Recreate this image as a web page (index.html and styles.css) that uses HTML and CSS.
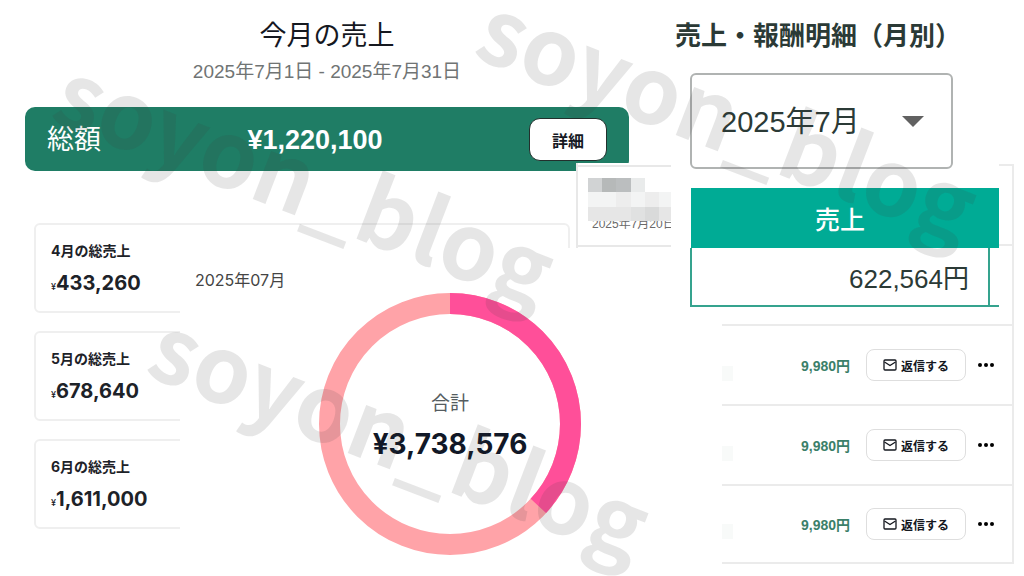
FILE: index.html
```
<!DOCTYPE html>
<html lang="ja">
<head>
  <meta charset="UTF-8">
  <meta name="viewport" content="width=device-width, initial-scale=1.0">
  <title>今月の売上</title>
  <link rel="stylesheet" href="styles.css">
</head>
<body>
  <div class="collage">
    <main class="sales">
      <header class="sales-header">
        <h1>今月の売上</h1>
        <p>2025年7月1日 - 2025年7月31日</p>
      </header>

      <section class="total-bar">
        <span class="total-label">総額</span>
        <strong class="total-value">¥1,220,100</strong>
        <button type="button" class="detail-button">詳細</button>
      </section>

      <div class="overview">
        <div class="months">
          <section class="month-card">
            <h2>4月の総売上</h2>
            <p><small>¥</small>433,260</p>
          </section>
          <section class="month-card">
            <h2>5月の総売上</h2>
            <p><small>¥</small>678,640</p>
          </section>
          <section class="month-card">
            <h2>6月の総売上</h2>
            <p><small>¥</small>1,611,000</p>
          </section>
        </div>

        <section class="chart-panel">
          <h2>2025年07月</h2>
          <div class="donut">
            <svg viewBox="0 0 262 262" aria-hidden="true">
              <circle class="ring" cx="131" cy="131" r="120.5"/>
              <circle class="ring-part" cx="131" cy="131" r="120.5" pathLength="1000" stroke-dasharray="369 631" transform="rotate(-90 131 131)"/>
            </svg>
            <div class="donut-text">
              <span>合計</span>
              <strong>¥3,738,576</strong>
            </div>
          </div>
        </section>
      </div>

      <aside class="message-card">
        <svg class="mosaic" viewBox="0 0 84 43" aria-hidden="true" shape-rendering="crispEdges">
          <path fill="#d1d3d4" d="M0 0h14v14H0z"/>
          <path fill="#b6b9b9" d="M14 0h14v14H14z"/>
          <path fill="#bbbebf" d="M28 0h15v14H28z"/>
          <path fill="#e9ebeb" d="M43 0h14v14H43z"/>
          <path fill="#f3f4f4" d="M0 14h84v15H0z"/>
          <path fill="#ededed" d="M28 14h15v15H28zM57 14h14v15H57z"/>
          <path fill="#e6e6e6" d="M0 29h84v14H0z"/>
          <path fill="#e0e1e1" d="M43 29h14v14H43z"/>
          <path fill="#d9dada" d="M57 29h14v14H57z"/>
        </svg>
        <time datetime="2025-07-20">2025年7月20日</time>
      </aside>
    </main>

    <div class="side">
      <ul class="orders">
        <li></li>
        <li></li>
        <li>
          <i class="smudge"></i>
          <span class="price">9,980円</span>
          <button type="button" class="reply-button">
            <svg viewBox="0 0 14 12" aria-hidden="true"><rect x="1" y="1" width="12" height="10" rx="1"/><path d="M1.5 3 7 6.500 12.500 3"/></svg>
            返信する
          </button>
          <button type="button" class="more-button" aria-label="その他">
            <svg viewBox="0 0 16 4" aria-hidden="true"><circle cx="2" cy="2" r="2"/><circle cx="8" cy="2" r="2"/><circle cx="14" cy="2" r="2"/></svg>
          </button>
        </li>
        <li>
          <i class="smudge"></i>
          <span class="price">9,980円</span>
          <button type="button" class="reply-button">
            <svg viewBox="0 0 14 12" aria-hidden="true"><rect x="1" y="1" width="12" height="10" rx="1"/><path d="M1.5 3 7 6.500 12.500 3"/></svg>
            返信する
          </button>
          <button type="button" class="more-button" aria-label="その他">
            <svg viewBox="0 0 16 4" aria-hidden="true"><circle cx="2" cy="2" r="2"/><circle cx="8" cy="2" r="2"/><circle cx="14" cy="2" r="2"/></svg>
          </button>
        </li>
        <li>
          <i class="smudge"></i>
          <span class="price">9,980円</span>
          <button type="button" class="reply-button">
            <svg viewBox="0 0 14 12" aria-hidden="true"><rect x="1" y="1" width="12" height="10" rx="1"/><path d="M1.5 3 7 6.500 12.500 3"/></svg>
            返信する
          </button>
          <button type="button" class="more-button" aria-label="その他">
            <svg viewBox="0 0 16 4" aria-hidden="true"><circle cx="2" cy="2" r="2"/><circle cx="8" cy="2" r="2"/><circle cx="14" cy="2" r="2"/></svg>
          </button>
        </li>
      </ul>

      <section class="report">
        <h2><label for="month">売上・報酬明細（月別）</label></h2>
        <div class="report-body">
          <div class="month-select">
            <select id="month">
              <option>2025年7月</option>
            </select>
            <svg viewBox="0 0 22 11" aria-hidden="true"><path d="M0 0h22L11 11z"/></svg>
          </div>
          <table>
            <thead>
              <tr><th scope="col">売上</th><td></td></tr>
            </thead>
            <tbody>
              <tr><td>622,564円</td><td></td></tr>
            </tbody>
          </table>
        </div>
      </section>
    </div>

    <span class="watermark watermark-top">soyon_blog</span>
    <span class="watermark watermark-right">soyon_blog</span>
    <span class="watermark watermark-bottom">soyon_blog</span>
  </div>
</body>
</html>
```
FILE: styles.css
```
* {
  box-sizing: border-box;
}

body {
  margin: 0;
  background-color: #fff;
  color: #1d2228;
  font-family: "Liberation Sans", "Noto Sans CJK JP", sans-serif;
  font-optical-sizing: none;
}

h1, h2, p, ul {
  margin: 0;
  padding: 0;
}

button, select {
  font-family: inherit;
  color: inherit;
  cursor: pointer;
}

.collage {
  position: relative;
  display: grid;
  grid-template-columns: 660fr 364fr;
  min-height: 100vh;
  overflow: hidden;
}

/* left side */
.sales {
  position: relative;
  display: flex;
  flex-direction: column;
  padding: 16px 0 0 25px;
}

.sales-header {
  margin-right: 31px;
  text-align: center;
}

.sales-header h1 {
  font-size: 27px;
  line-height: 40px;
  font-weight: 400;
  color: #15181f;
}

.sales-header p {
  font-size: 19px;
  line-height: 32px;
  color: #707474;
}

.total-bar {
  display: grid;
  grid-template-columns: 25fr auto 28fr;
  align-items: center;
  min-height: 64px;
  margin: 19px 31px 0 0;
  padding: 1px 22px 0;
  border-radius: 10px;
  background-color: #1f7d65;
  color: #fff;
}

.total-label,
.total-value {
  font-size: 27px;
  line-height: 40px;
}

.detail-button {
  justify-self: end;
  width: 78px;
  height: 43px;
  padding: 0;
  border: 1px solid #22302d;
  border-radius: 11px;
  background-color: #fff;
  color: #15181f;
  font-size: 16px;
  font-weight: 700;
}

.overview {
  flex: 1;
  display: grid;
  margin-top: 52px;
}

.months,
.chart-panel {
  grid-area: 1 / 1;
}

.months {
  display: flex;
  flex-direction: column;
  gap: 18px;
  margin: 0 90px 0 9px;
}

.month-card {
  height: 90px;
  padding: 15px;
  border: 2px solid #efefef;
  border-radius: 6px;
  font-family: Inter, "Noto Sans CJK JP", sans-serif;
}

.month-card h2 {
  font-size: 14px;
  line-height: 22px;
  font-weight: 700;
}

.month-card p {
  margin-top: 6px;
  font-size: 20px;
  line-height: 30px;
  font-weight: 700;
}

.month-card small {
  font-size: 9px;
  font-weight: 500;
}

/* covers the right part of the month cards */
.chart-panel {
  margin: 25px -60px 0 155px;
  padding-top: 20px;
  background-color: #fff;
  font-family: Inter, "Noto Sans CJK JP", sans-serif;
}

.chart-panel h2 {
  padding-left: 15px;
  font-size: 16px;
  line-height: 25px;
  font-weight: 400;
  color: #444;
}

.donut {
  display: grid;
  width: 262px;
  margin: 0 auto;
}

.donut svg,
.donut-text {
  grid-area: 1 / 1;
}

.donut circle {
  fill: none;
  stroke-width: 21;
}

.ring {
  stroke: #ffa3a8;
}

.ring-part {
  stroke: #ff4f99;
}

.donut-text {
  display: flex;
  flex-direction: column;
  align-items: center;
  justify-content: center;
}

.donut-text span {
  font-size: 19px;
  line-height: 40px;
  color: #555c60;
}

.donut-text strong {
  font-size: 28px;
  line-height: 40px;
  color: #111827;
}

/* lies over the corner of the total bar */
.message-card {
  position: absolute;
  top: 163px;
  left: 576px;
  width: 95px;
  height: 85px;
  padding: 12px 0 0 10px;
  overflow: hidden;
  border-left: 2px solid #e8e8e8;
  background: linear-gradient(#e8e8e8, #e8e8e8) 0 2px / 100% 2px no-repeat,
    linear-gradient(#e8e8e8, #e8e8e8) 0 82px / 100% 2px no-repeat, #fff;
}

.mosaic {
  position: relative;
  display: block;
  width: 84px;
  margin-top: 3px;
}

.message-card time {
  display: block;
  margin: -6px 0 0 4px;
  font-size: 12px;
  line-height: 18px;
  white-space: nowrap;
  color: #6a6a6a;
}

/* right side */
.side {
  position: relative;
  display: grid;
}

.orders,
.report {
  grid-area: 1 / 1;
  align-self: start;
}

.orders {
  margin: 164px 10px 0 62px;
  border-right: 2px solid #ebebeb;
  list-style: none;
}

.orders li {
  display: flex;
  align-items: center;
  justify-content: flex-end;
  height: 80px;
  padding-right: 18px;
  border-top: 2px solid #ebebeb;
}

.orders li:last-child {
  border-bottom: 2px solid #ebebeb;
}

.smudge {
  align-self: flex-end;
  width: 11px;
  height: 15px;
  margin: 0 auto 23px 0;
  background-color: #f8faf9;
}

.price {
  font-size: 14px;
  font-weight: 700;
  color: #3b8069;
}

.reply-button {
  display: flex;
  align-items: center;
  justify-content: center;
  gap: 4px;
  width: 100px;
  height: 32px;
  margin: 0 12px 0 16px;
  padding: 0;
  border: 1px solid #dedede;
  border-radius: 8px;
  background-color: #fff;
  color: #15181f;
  font-size: 12px;
  font-weight: 700;
}

.reply-button svg {
  width: 14px;
  height: 12px;
  fill: none;
  stroke: #15181f;
  stroke-width: 1.3;
}

.more-button {
  display: flex;
  padding: 0;
  border: 0;
  background: none;
}

.more-button svg {
  width: 16px;
  height: 4px;
}

.report {
  margin: 0 25px 0 11px;
  padding: 16px 0 12px 4px;
  background-color: #fff;
  color: #2b3a36;
}

.report h2 {
  font-size: 26px;
  line-height: 40px;
  font-weight: 700;
  white-space: nowrap;
}

.report-body {
  margin: 17px 0 0 15px;
}

.month-select {
  position: relative;
  width: 85%;
}

.month-select select {
  appearance: none;
  display: block;
  width: 100%;
  height: 96px;
  padding: 2px 29px 0;
  border: 2px solid #b0b3b2;
  border-radius: 6px;
  background-color: #fff;
  font-size: 29px;
}

.month-select svg {
  position: absolute;
  top: 43px;
  right: 29px;
  width: 22px;
  fill: #616161;
  pointer-events: none;
}

table {
  width: 100%;
  margin-top: 19px;
  border-collapse: collapse;
}

thead {
  background-color: #00ab95;
  color: #fff;
}

th {
  height: 60px;
  padding: 0;
  font-size: 25px;
  font-weight: 500;
}

tbody td {
  height: 58px;
  padding: 0 19px 0 0;
  border: 2px solid #35a38e;
  border-top: 0;
  font-size: 26px;
  text-align: right;
}

td:last-child {
  width: 10px;
  padding: 0;
  border-right: 0;
}

.watermark {
  position: absolute;
  color: rgba(60, 60, 60, 0.13);
  font-family: "Noto Sans CJK JP", sans-serif;
  font-size: 92px;
  line-height: 100px;
  font-weight: 700;
  transform: translate(-50%, -50%) rotate(21deg);
  pointer-events: none;
}

.watermark-top {
  top: 177px;
  left: 307px;
}

.watermark-right {
  top: 113px;
  left: 730px;
}

.watermark-bottom {
  top: 431px;
  left: 402px;
}
```
